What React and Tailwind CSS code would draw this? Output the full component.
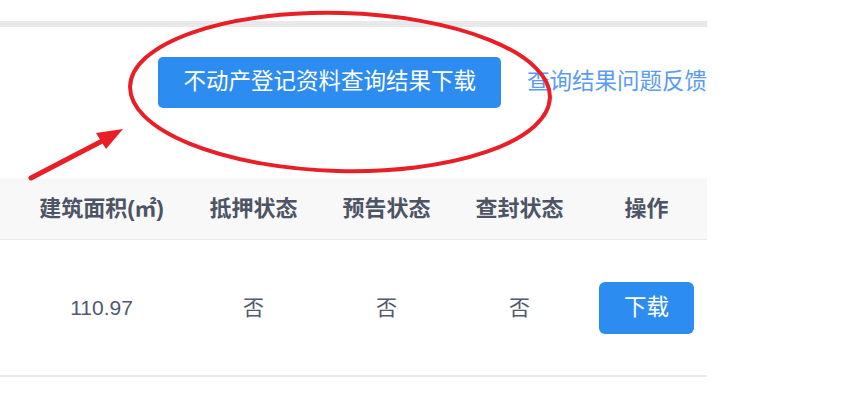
import React from "react";

const cols = [
  { label: "建筑面积(㎡)", value: "110.97", w: "w-[187px] pl-4" },
  { label: "抵押状态", value: "否", w: "w-[133px]" },
  { label: "预告状态", value: "否", w: "w-[133px]" },
  { label: "查封状态", value: "否", w: "w-[133px]" },
];

const Annotation = () => (
  // hand-drawn red marks over the page
  <svg className="absolute left-0 top-0 pointer-events-none" width="842" height="406" viewBox="0 0 842 406">
    <ellipse
      cx="340"
      cy="92"
      rx="210"
      ry="79"
      fill="none"
      stroke="#e81f26"
      strokeWidth="4"
      transform="rotate(1.5 340 92)"
    />
    <line x1="31" y1="178" x2="106" y2="139" stroke="#e81f26" strokeWidth="5" strokeLinecap="round" />
    <polygon points="96,133 123,129 106,149" fill="#e81f26" />
  </svg>
);

export default function App() {
  return (
    <div
      className="relative w-[842px] h-[406px] overflow-hidden bg-white"
      style={{ fontFamily: '"Liberation Sans", "Noto Sans CJK SC", sans-serif' }}
    >
      <div className="w-[707px] pt-[21px]">
        <div className="h-[6px] bg-[#e9e9e9]" />

        {/* toolbar */}
        <div className="flex items-center justify-end gap-[26px] pt-[30px] pb-[70px]">
          <button className="h-[51px] px-[25px] rounded-[5px] bg-[#2d8cf0] text-white text-[22.5px] leading-none">
            不动产登记资料查询结果下载
          </button>
          <a className="text-[22.5px] text-[#5a9cf5] whitespace-nowrap leading-none">查询结果问题反馈</a>
        </div>

        {/* table */}
        <div className="flex h-[62px] items-center bg-[#f8f8f9] border-b border-[#e8eaec] text-[22px] font-bold text-[#4d5466]">
          {cols.map((c) => (
            <div key={c.label} className={`${c.w} text-center`}>
              {c.label}
            </div>
          ))}
          <div className="flex-1 text-center">操作</div>
        </div>
        <div className="flex h-[137px] items-center border-b-2 border-[#e8eaec] text-[21px] text-[#515a6e]">
          {cols.map((c) => (
            <div key={c.label} className={`${c.w} text-center`}>
              {c.value}
            </div>
          ))}
          <div className="flex flex-1 justify-center">
            <button className="w-[95px] h-[52px] rounded-[6px] bg-[#2d8cf0] text-white text-[22.5px]">下载</button>
          </div>
        </div>
      </div>
      <Annotation />
    </div>
  );
}
